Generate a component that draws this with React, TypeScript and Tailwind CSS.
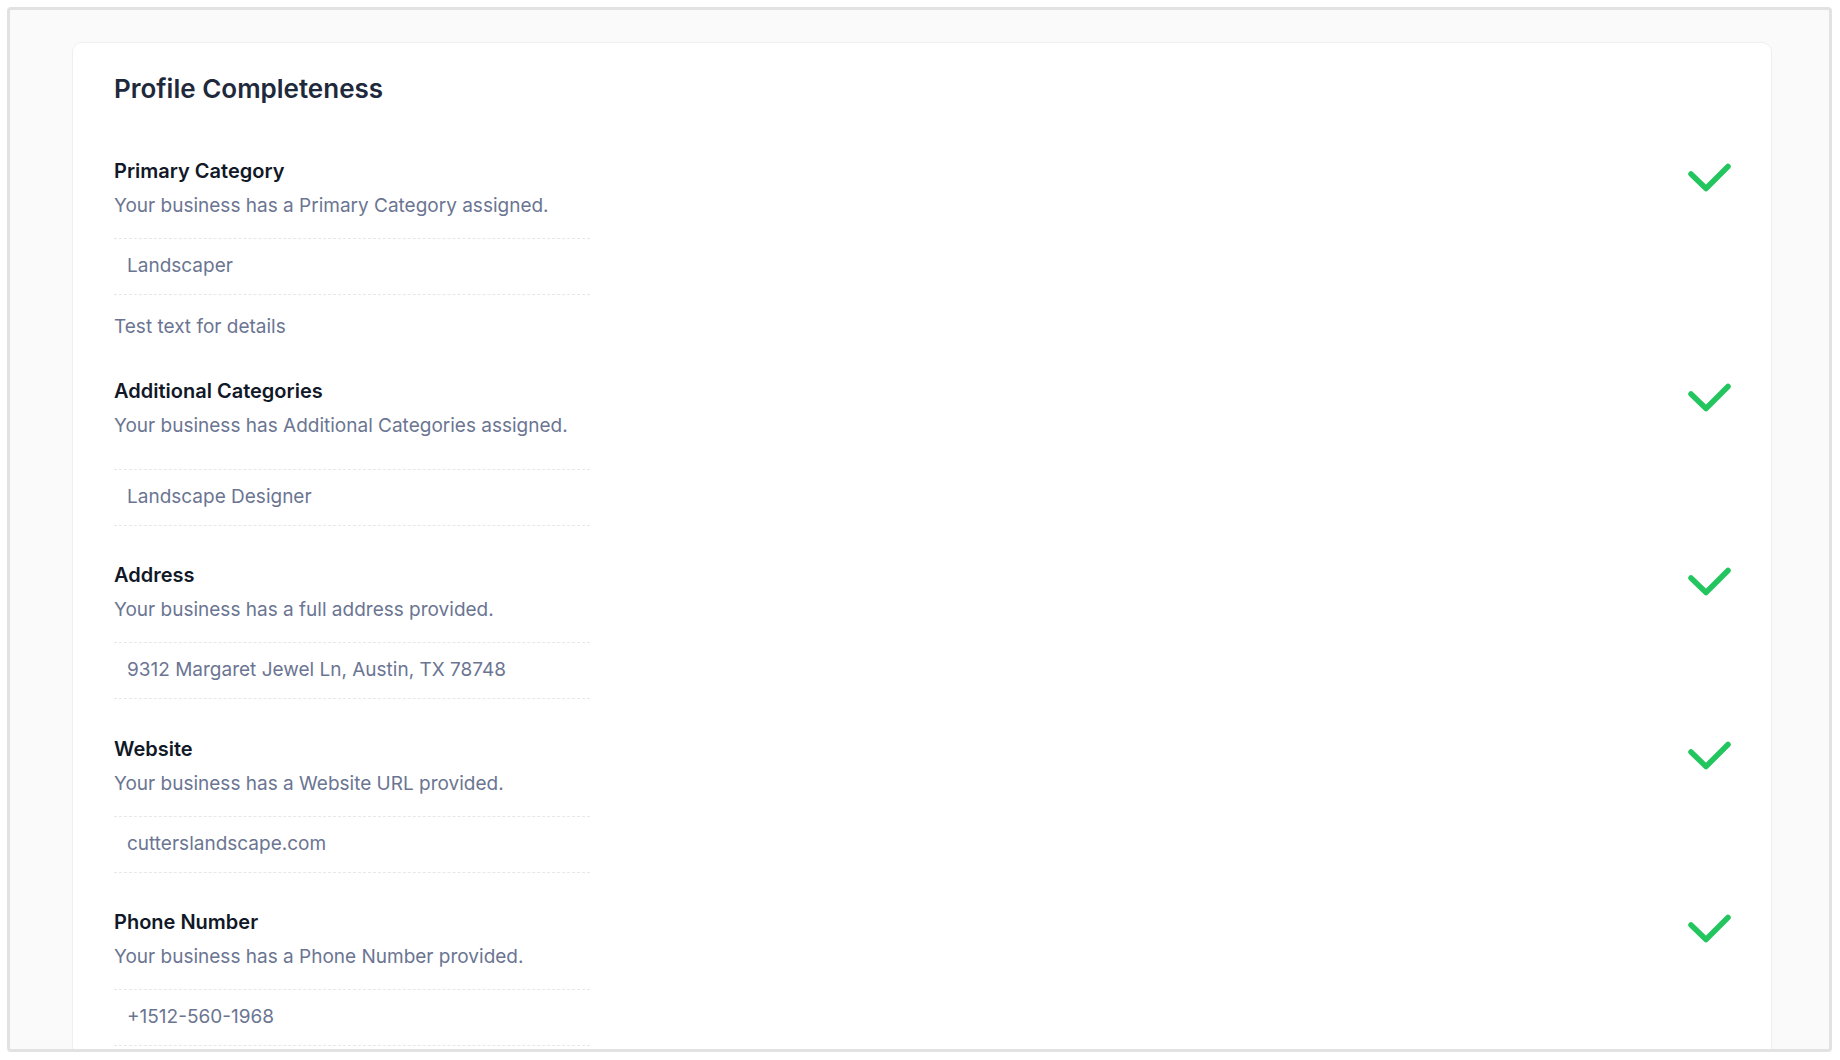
import React from "react";

type Item = {
  title: string;
  desc: string;
  value: string;
  extra?: string;
  boxGap: string;
};

const items: Item[] = [
  {
    title: "Primary Category",
    desc: "Your business has a Primary Category assigned.",
    value: "Landscaper",
    extra: "Test text for details",
    boxGap: "mt-[18px]",
  },
  {
    title: "Additional Categories",
    desc: "Your business has Additional Categories assigned.",
    value: "Landscape Designer",
    boxGap: "mt-[29px]",
  },
  {
    title: "Address",
    desc: "Your business has a full address provided.",
    value: "9312 Margaret Jewel Ln, Austin, TX 78748",
    boxGap: "mt-[18px]",
  },
  {
    title: "Website",
    desc: "Your business has a Website URL provided.",
    value: "cutterslandscape.com",
    boxGap: "mt-[18px]",
  },
  {
    title: "Phone Number",
    desc: "Your business has a Phone Number provided.",
    value: "+1512-560-1968",
    boxGap: "mt-[18px]",
  },
];

function CheckMark() {
  return (
    <svg
      width="47"
      height="34"
      viewBox="0 0 47 34"
      fill="none"
      className="mt-1 shrink-0"
    >
      <polyline
        points="7,13 22,27.5 44,5.5"
        stroke="#22c55e"
        strokeWidth="5.5"
        strokeLinecap="round"
        strokeLinejoin="round"
      />
    </svg>
  );
}

export default function App() {
  return (
    <div
      className="w-[1840px] h-[1060px] bg-white pt-[7px] pl-[7px] pr-[8px] pb-[8px] overflow-hidden"
      style={{ fontFamily: "Inter, 'Noto Sans', 'Liberation Sans', sans-serif" }}
    >
      <div className="h-full border-[3px] border-[#e2e2e2] rounded-[4px] bg-[#fafafa] overflow-hidden pt-[32px] pl-[62px]">
        <div className="w-[1700px] bg-white border border-[#efefef] rounded-[10px] pl-[41px] pr-10 pt-[30px] pb-12">
          <h2 className="text-[26px] leading-8 font-semibold text-[#1e293b]">
            Profile Completeness
          </h2>
          <div className="mt-[52px] flex flex-col gap-[35.5px]">
            {items.map((it) => (
              <div key={it.title} className="flex items-start justify-between">
                <div className="w-[476px]">
                  <h3 className="text-[20px] leading-7 font-semibold text-[#111827]">
                    {it.title}
                  </h3>
                  <p className="mt-[7px] text-[19px] leading-7 text-[#6b7592]">
                    {it.desc}
                  </p>
                  <div
                    className={`${it.boxGap} border-y border-dashed border-[#e6e7ea] pt-[13px] pb-[14px] pl-[13px] text-[19px] leading-7 text-[#6b7592]`}
                  >
                    {it.value}
                  </div>
                  {it.extra ? (
                    <p className="mt-[18px] text-[19px] leading-7 text-[#6b7592]">
                      {it.extra}
                    </p>
                  ) : null}
                </div>
                <CheckMark />
              </div>
            ))}
          </div>
        </div>
      </div>
    </div>
  );
}
